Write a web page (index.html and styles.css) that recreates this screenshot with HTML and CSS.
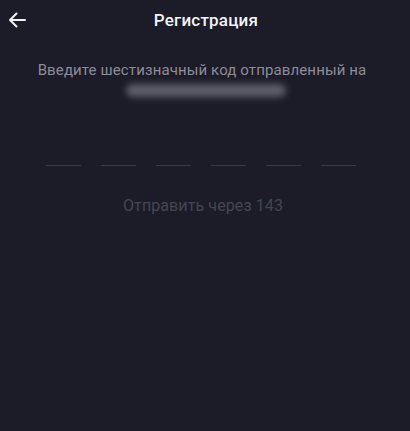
FILE: index.html
```html
<!DOCTYPE html>
<html lang="ru">
<head>
<meta charset="utf-8">
<link rel="stylesheet" href="styles.css">
</head>
<body>
<div class="screen">
  <header class="topbar">
    <button class="back" aria-label="Назад">
      <svg width="18" height="16" viewBox="0 0 18 16"><path d="M17 8H2M8.5 1.5L2 8l6.5 6.5" fill="none" stroke="#f2f2f5" stroke-width="2" stroke-linecap="round" stroke-linejoin="round"/></svg>
    </button>
    <h1 class="title">Регистрация</h1>
  </header>
  <p class="subtitle">Введите шестизначный код отправленный на</p>
  <div class="phone"><span class="phone-blur"></span></div>
  <div class="code">
    <span class="cell"></span><span class="cell"></span><span class="cell"></span><span class="cell"></span><span class="cell"></span><span class="cell"></span>
  </div>
  <p class="resend">Отправить через 143</p>
</div>
</body>
</html>
```
FILE: styles.css
```css
html, body { margin: 0; padding: 0; }
body { background: #1c1b28; font-family: Roboto, "Noto Sans", sans-serif; }
.screen { width: 410px; height: 431px; display: flex; flex-direction: column; align-items: center; }
.topbar { position: relative; width: 100%; height: 40px; display: flex; align-items: center; justify-content: center; }
.back { position: absolute; left: 8px; top: 12px; background: none; border: 0; padding: 0; width: 18px; height: 16px; }
.back svg { display: block; }
.title { margin: 0 0 0 2px; font-size: 17px; font-weight: 500; color: #f4f4f6; letter-spacing: 0.2px; }
.subtitle { margin: 21px 6px 0 0; font-size: 15px; letter-spacing: 0.12px; color: #8d8c98; line-height: 18px; }
.phone { height: 18px; margin-top: 2px; display: flex; align-items: center; margin-left: 2px; }
.phone-blur { display: block; width: 160px; height: 13px; border-radius: 7px; background: #5f5e6b; filter: blur(3.5px); }
.code { display: flex; gap: 20px; margin-top: 66px; margin-right: 8px; }
.cell { display: block; width: 35px; height: 1px; background: #383745; }
.resend { margin: 31px 4px 0 0; font-size: 16px; letter-spacing: 0.1px; color: #46454f; line-height: 18px; }
```
